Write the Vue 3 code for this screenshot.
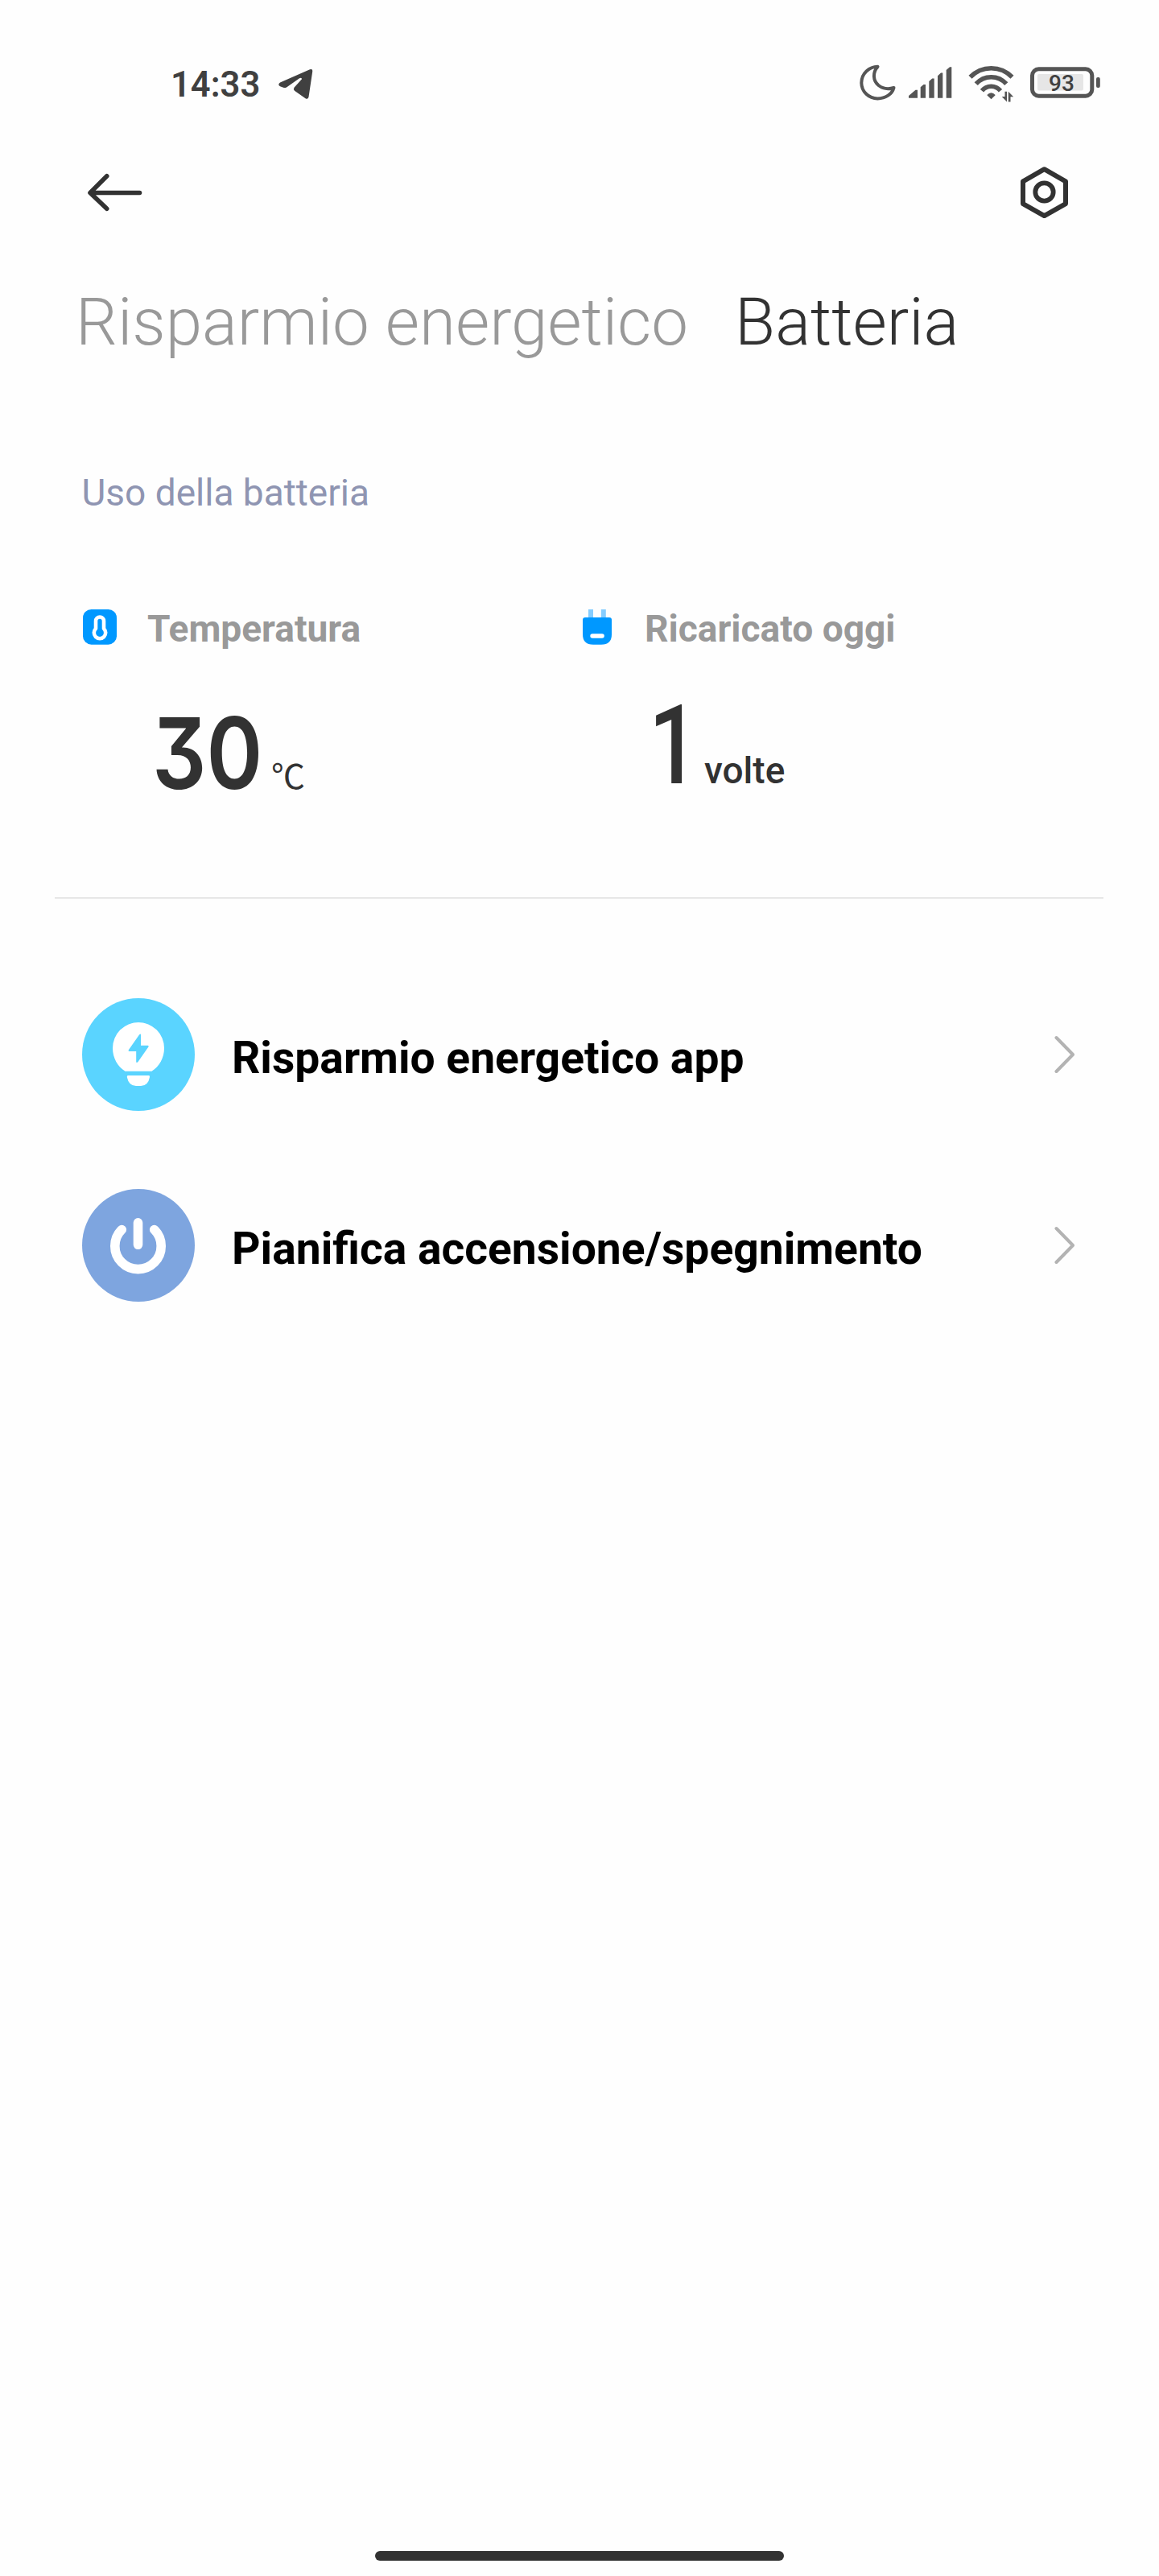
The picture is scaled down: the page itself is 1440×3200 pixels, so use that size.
<script setup>
import { ref } from "vue";

const time = ref("14:33");
const charge = ref(93);
const activeTab = ref("batteria");

const tabs = [
    { id: "risparmio", label: "Risparmio energetico" },
    { id: "batteria", label: "Batteria" }
];

const links = [
    { id: "bulb", label: "Risparmio energetico app" },
    { id: "power", label: "Pianifica accensione/spegnimento" }
];
</script>

<template>
    <div class="screen">
        <div class="status">
            <span class="time">{{ time }}</span>
            <svg class="telegram" width="46" height="60" viewBox="0 0 46 60">
                <path d="M4 29.5L41 13.3Q44.6 12 44.2 16L39.5 47.5Q38.5 50.8 35.5 49.2L22 39.8Q20 38 21.5 35.8L31 25.2Q31 22.7 28 24.2L12 35.4Q10 36.3 8 35.7L4 34.3Q.5 32 4 29.5Z" fill="#404040" />
            </svg>
            <div class="status-right">
                <svg width="50" height="60" viewBox="0 0 50 60">
                    <path d="M24.5 9.8C14 10 4.3 18 4.3 30A20 19.6 0 0 0 24.5 49.4C34 49.4 42.5 44 44.5 36C38 38 31 37.3 25.5 33C18.5 27 18 17 24.5 9.8Z" fill="none" stroke="#555" stroke-width="4" stroke-linejoin="round" />
                </svg>
                <svg class="signal" width="54" height="60" viewBox="0 0 54 60" fill="#555">
                    <path d="M0 46L8.5 38.8H11V48.7H0ZM14.7 35.2L18.5 32H21V48.7H14.7ZM25.3 28L29.2 24.6H31.7V48.7H25.3ZM36 21.3L40 17.6H42.3V48.7H36ZM46.7 14L51 10.3H53.3V48.7H46.7Z" />
                </svg>
                <svg class="wifi" width="60" height="60" viewBox="0 0 60 60" fill="none" stroke="#555" stroke-width="5.6">
                    <path d="M2.5 22.8A36 36 0 0 1 54.5 22.8M9.7 31.2A25 25 0 0 1 47.3 31.2M17 39.8A14.6 14.6 0 0 1 40 39.8" />
                    <path d="M23.3 45Q28.5 39.5 33.7 45Q33 46 28.5 50.3Q24 46 23.3 45Z" fill="#555" stroke="none" />
                    <path d="M45.5 40.7H48V53.5L41.7 47H45.5ZM49.8 53.5V40.7L56.2 47.2H52.5V53.5Z" fill="#555" stroke="none" />
                </svg>
                <svg class="battery" width="90" height="60" viewBox="0 0 90 60">
                    <rect x="2.5" y="12.8" width="74.3" height="33.4" rx="8" fill="none" stroke="#555" stroke-width="5" />
                    <rect x="9" y="19" width="57" height="20.4" rx="2" fill="#e6e6e6" />
                    <rect x="82" y="23" width="4.8" height="13" rx="2" fill="#555" />
                    <text x="39" y="40.3" text-anchor="middle" class="charge">{{ charge }}</text>
                </svg>
            </div>
        </div>

        <div class="toolbar">
            <svg width="70" height="60" viewBox="0 0 70 60">
                <path d="M24.7 9.8L4 30.5L24.7 50.2M5 30.5H65.5" fill="none" stroke="#323232" stroke-width="5.6" stroke-linecap="round" stroke-linejoin="round" />
            </svg>
            <svg width="60" height="64" viewBox="0 0 60 64" fill="none" stroke="#323232">
                <path d="M29.5 3.2L56 18.3V46.1L29.5 61.1L3 46.1V18.3Z" stroke-width="6" stroke-linejoin="round" />
                <circle cx="29.5" cy="31.5" r="11.2" stroke-width="5.8" />
            </svg>
        </div>

        <div class="tabs">
            <span v-for="tab in tabs" :key="tab.id" class="tab" :class="{ active: tab.id === activeTab }" @click="activeTab = tab.id">{{ tab.label }}</span>
        </div>

        <div class="section-title">Uso della batteria</div>

        <div class="stats">
            <div class="stat">
                <div class="stat-head">
                    <svg width="42" height="44" viewBox="0 0 42 44">
                        <rect width="42" height="43.7" rx="10.5" fill="#0098ff" />
                        <path d="M16 14.5a5 5 0 0 1 10 0V23.8a7.2 7.2 0 1 1-10 0Z" fill="none" stroke="#fff" stroke-width="4.6" stroke-linejoin="round" />
                    </svg>
                    <span>Temperatura</span>
                </div>
                <div class="stat-value temp">
                    <span class="num">30</span>
                    <span class="unit">℃</span>
                </div>
            </div>
            <div class="stat">
                <div class="stat-head">
                    <svg width="42" height="44" viewBox="0 0 42 44">
                        <path d="M10 0h6v11h-6zM25.8 0h6v11h-6z" fill="#85cdff" />
                        <path d="M6 10H36Q39 10 39 13V31Q39 43.7 26 43.7H16Q3 43.7 3 31V13Q3 10 6 10Z" fill="#0098ff" />
                        <rect x="12.3" y="30.2" width="17.5" height="5.6" rx="2.8" fill="#fff" />
                    </svg>
                    <span>Ricaricato oggi</span>
                </div>
                <div class="stat-value times">
                    <span class="num">1</span>
                    <span class="unit">volte</span>
                </div>
            </div>
        </div>

        <div class="divider"></div>

        <div class="links">
            <div v-for="link in links" :key="link.id" class="link">
                <svg v-if="link.id === 'bulb'" width="140" height="140" viewBox="0 0 140 140">
                    <circle cx="70" cy="70" r="70" fill="#5ad4ff" />
                    <path d="M53.5 90.7C44 85 38 74 38 62A32 32 0 0 1 102 62C102 74 96 85 86.5 90.7ZM57 96H83Q84.2 96 84 98Q82 109 73 109H67Q58 109 55.8 98Q55.6 96 57 96Z" fill="#fff" />
                    <path d="M71.3 45L73 44.6V58.7H81.7Q83.4 58.7 82.4 60.4L69.5 79Q67.5 81 67.2 79V66H58.5Q57 65.6 57.8 64.2Z" fill="#5ad4ff" />
                </svg>
                <svg v-else width="140" height="140" viewBox="0 0 140 140">
                    <circle cx="70" cy="70" r="70" fill="#7ea5df" />
                    <path d="M49.3 50.5A28.7 28.7 0 1 0 89.7 50.5M69.5 41.8V69.3" fill="none" stroke="#fff" stroke-width="11.6" stroke-linecap="round" />
                </svg>
                <span class="label">{{ link.label }}</span>
                <svg width="28" height="50" viewBox="0 0 28 50">
                    <path d="M2.5 4L23 25L2.5 46" fill="none" stroke="#b3b3b3" stroke-width="4" stroke-linecap="round" stroke-linejoin="round" />
                </svg>
            </div>
        </div>

        <div class="home-bar"></div>
    </div>
</template>

<style>
body {
    margin: 0;
    background: #fefefe;
}
</style>

<style scoped>
.screen {
    display: flex;
    flex-direction: column;
    width: 1440px;
    height: 3200px;
    box-sizing: border-box;
    padding-bottom: 19px;
    background: #fefefe;
    font-family: Roboto, "Noto Sans", sans-serif;
    color: #323232;
}

svg {
    display: block;
    flex: none;
}

.status {
    display: flex;
    align-items: center;
    height: 60px;
    padding: 73px 70px 0 212px;
}

.time {
    width: 132px;
    padding-top: 5px;
    font-size: 43.5px;
    line-height: 60px;
    font-weight: 600;
    color: #404040;
}

.status-right {
    display: flex;
    margin-left: auto;
}

.signal {
    margin-left: 13px;
}

.wifi {
    margin-left: 20px;
}

.battery {
    margin-left: 17px;
}

.charge {
    font-size: 28px;
    font-weight: 500;
    fill: #404040;
}

.toolbar {
    display: flex;
    justify-content: space-between;
    align-items: center;
    height: 64px;
    margin-top: 74px;
    padding: 0 112px 0 108px;
}

.tabs {
    display: flex;
    gap: 58px;
    margin-top: 79px;
    padding-left: 94px;
    font-size: 81.7px;
    line-height: 100px;
    font-weight: 300;
    color: #999;
    white-space: nowrap;
}

.tab.active {
    color: #323232;
}

.section-title {
    margin-top: 132px;
    padding-left: 101.5px;
    font-size: 46px;
    line-height: 60px;
    color: #8f95b2;
}

.stats {
    display: grid;
    grid-template-columns: 618px 1fr;
    height: 293px;
    margin-top: 115px;
    padding-left: 103px;
}

.stat-head {
    display: flex;
    align-items: center;
    gap: 38px;
    height: 44px;
    font-size: 46.1px;
    line-height: 44px;
    font-weight: 700;
    color: #999;
}

.stat-head span {
    padding-top: 4px;
}

.stat-value {
    display: flex;
    align-items: baseline;
    line-height: 150px;
}

.temp {
    margin-top: 60px;
    padding-left: 86px;
}

.temp .num {
    width: 148px;
    font-family: Inter, Roboto, sans-serif;
    font-size: 123px;
    font-weight: 600;
    font-feature-settings: "cv09";
    transform: scaleX(0.86);
    transform-origin: left;
}

.temp .unit {
    font-family: "Noto Sans CJK SC", sans-serif;
    font-size: 42px;
    font-weight: 400;
}

/* the big digits are narrower than the text face */
.times {
    margin-top: 50px;
    padding-left: 85px;
}

.times .num {
    width: 69px;
    font-size: 137px;
    font-weight: 500;
    transform: scaleX(0.8);
    transform-origin: left;
}

.times .unit {
    font-size: 46px;
    font-weight: 500;
}

.divider {
    height: 1px;
    margin: 65px 69px 0 68px;
    background: #c8c8c8;
}

.links {
    display: flex;
    flex-direction: column;
    gap: 97px;
    margin-top: 124px;
}

.link {
    display: flex;
    align-items: center;
    height: 140px;
    padding: 0 102px;
    color: #000;
}

.label {
    flex: 1;
    padding: 7px 0 0 46px;
    font-size: 55.2px;
    line-height: 70px;
    font-weight: 700;
}

.home-bar {
    width: 508px;
    height: 12px;
    margin: auto auto 0;
    border-radius: 6px;
    background: #323232;
}
</style>
